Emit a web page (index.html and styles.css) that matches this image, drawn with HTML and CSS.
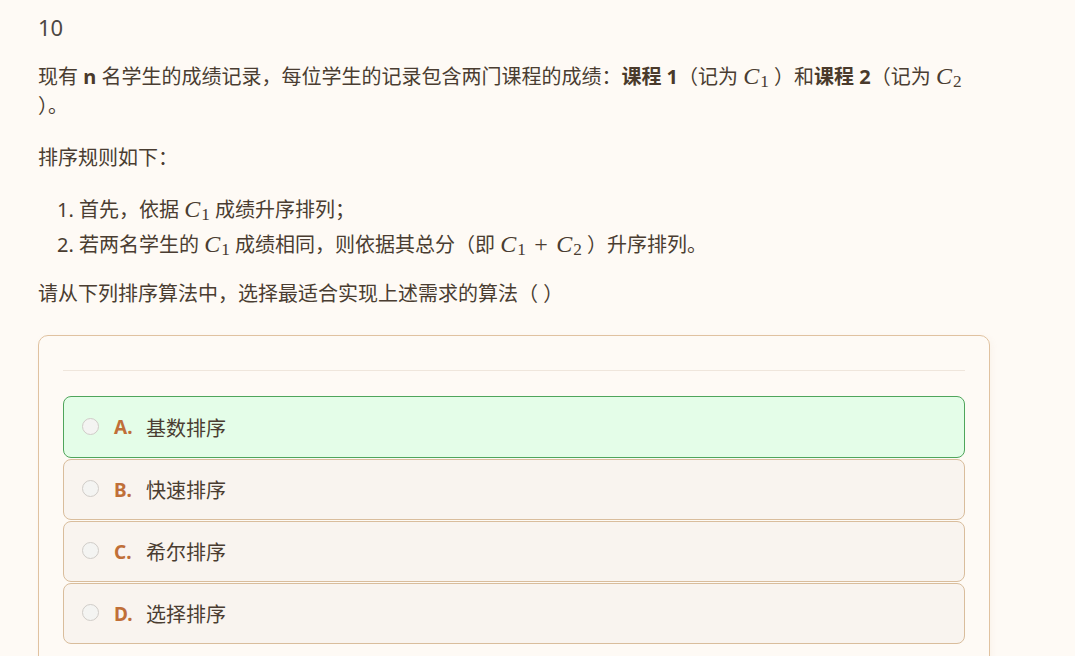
FILE: index.html
```html
<!DOCTYPE html>
<html lang="zh-CN">
<head>
<meta charset="utf-8">
<title>10</title>
<link rel="stylesheet" href="styles.css">
</head>
<body>
<main class="question">
  <div class="q-num">10</div>
  <p class="para">现有 <b>n</b> 名学生的成绩记录，每位学生的记录包含两门课程的成绩：<b>课程 1</b>（记为 <span class="math"><i>C</i><sub>1</sub></span> ）和<b>课程 2</b>（记为 <span class="math"><i>C</i><sub>2</sub></span> ）。</p>
  <p class="para">排序规则如下：</p>
  <ol class="rules">
    <li>首先，依据 <span class="math"><i>C</i><sub>1</sub></span> 成绩升序排列；</li>
    <li>若两名学生的 <span class="math"><i>C</i><sub>1</sub></span> 成绩相同，则依据其总分（即 <span class="math"><i>C</i><sub>1</sub><span class="op">+</span><i>C</i><sub>2</sub></span> ）升序排列。</li>
  </ol>
  <p class="para">请从下列排序算法中，选择最适合实现上述需求的算法（ ）</p>

  <section class="card">
    <div class="card-head"></div>
    <div class="options">
      <div class="option selected">
        <span class="radio"></span>
        <span class="label">A.</span>
        <span class="text">基数排序</span>
      </div>
      <div class="option">
        <span class="radio"></span>
        <span class="label">B.</span>
        <span class="text">快速排序</span>
      </div>
      <div class="option">
        <span class="radio"></span>
        <span class="label">C.</span>
        <span class="text">希尔排序</span>
      </div>
      <div class="option">
        <span class="radio"></span>
        <span class="label">D.</span>
        <span class="text">选择排序</span>
      </div>
    </div>
  </section>
</main>
</body>
</html>
```
FILE: styles.css
```css
html, body {
  margin: 0;
  padding: 0;
  background: #fefaf5;
}

body {
  font-family: "Noto Sans", "Noto Sans CJK SC", sans-serif;
  color: #4a3d31;
  font-size: 20px;
}

.question {
  width: 952px;
  margin-left: 38px;
  padding-top: 12px;
}

.q-num {
  font-size: 22px;
  line-height: 30px;
  color: #4d4743;
  margin-bottom: 20px;
}

.para {
  margin: 0 0 23px 0;
  line-height: 29px;
}

.para b {
  font-weight: 700;
  color: #4a3a2b;
}

.math {
  font-family: "Liberation Serif", "DejaVu Serif", serif;
  font-size: 1.2em;
  line-height: 1;
  white-space: nowrap;
}

.math i {
  font-style: italic;
  margin-right: 1px;
}

.math sub {
  font-size: 0.72em;
  vertical-align: -0.2em;
  line-height: 1;
}

.math .op {
  margin: 0 0.35em;
}

.rules {
  margin: 0 0 20px 0;
  padding-left: 19px;
  list-style-position: inside;
}

.rules li {
  line-height: 29px;
  margin-bottom: 6px;
}

.card {
  margin-top: 27px;
  border: 1px solid #e0c2a0;
  border-radius: 10px;
  padding: 0 24px 24px;
  box-shadow: 2px 2px 6px rgba(200, 170, 130, 0.08);
}

.card-head {
  height: 34px;
  border-bottom: 1px solid #efe6dc;
  margin-bottom: 25px;
}

.options {
  display: flex;
  flex-direction: column;
  gap: 1px;
}

.option {
  display: flex;
  align-items: center;
  height: 59px;
  padding-left: 18px;
  border: 1px solid #d9bd9c;
  border-radius: 8px;
  background: #f9f4ef;
}

.option.selected {
  height: 60px;
  background: #e4fde8;
  border-color: #4fa55b;
}

.radio {
  width: 15px;
  height: 15px;
  border: 1.5px solid #d0ccc8;
  border-radius: 50%;
  background: #f4f4f2;
  margin-right: 15px;
  flex: none;
  position: relative;
  top: -1px;
}

.label {
  color: #c06f38;
  font-weight: 700;
  font-size: 19px;
  width: 32px;
}

.text {
  font-size: 20px;
  color: #4a3d31;
}
```
